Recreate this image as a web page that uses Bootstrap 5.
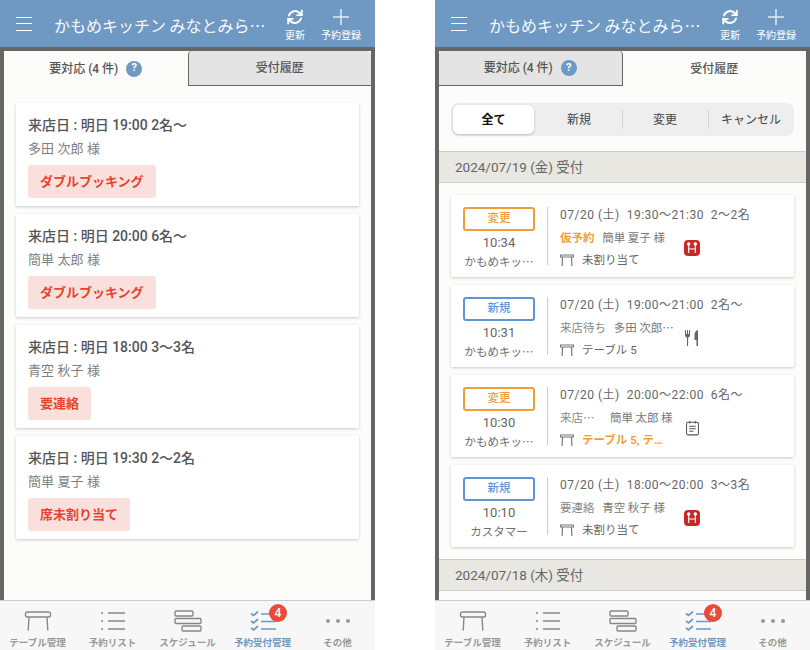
<!DOCTYPE html>
<html lang="ja">
<head>
    <meta charset="UTF-8">
    <meta name="viewport" content="width=device-width, initial-scale=1.0">
    <title>予約受付管理</title>
    <link href="https://cdn.jsdelivr.net/npm/bootstrap@5.3.0/dist/css/bootstrap.min.css" rel="stylesheet">
    <style>
        body { font-family: Roboto, "Noto Sans CJK JP", sans-serif; background: #fff; height: 650px; overflow: hidden; }
        .phone { width: 375px; height: 650px; overflow: hidden; }
        .top-bar { height: 47px; background: #6f99c2; color: #fff; padding-left: 16px; }
        .burger { width: 16px; height: 14px; margin-right: 22px; border-top: 1.5px solid #fff; border-bottom: 1.5px solid #fff; position: relative; }
        .burger::after { content: ""; position: absolute; left: 0; right: 0; top: 5px; border-top: 1.5px solid #fff; }
        .top-title { width: 210px; margin-top: 3px; font-family: "Noto Sans CJK JP", sans-serif; font-size: 16px; line-height: 20px; white-space: nowrap; opacity: .95; }
        .top-action { font-size: 10px; line-height: 12px; white-space: nowrap; align-self: flex-start; padding-top: 8px; }
        .top-action svg { display: block; margin: 0 auto 4px; }
        .refresh-action { width: 40px; margin-left: 11px; }
        .add-action { width: 46px; margin-left: 3px; }
        .phone-body { flex: 1; min-height: 0; background: #fcfcfa; border: solid #666; border-width: 4px 4px 0; overflow: hidden; }
        .tab-row { height: 35px; flex: none; }
        .tab-item { width: 50%; font-size: 12px; color: #555; font-weight: 500; }
        .tab-on { background: #fcfcfa; border-radius: 4px 4px 0 0; }
        .tab-off { background: #e4e4e4; border-bottom: 1px solid #666; border-radius: 4px 4px 0 0; }
        .tab-off-right { border-left: 1px solid #666; }
        .tab-off-left { border-right: 1px solid #666; }
        .help-dot { width: 16px; height: 16px; border-radius: 50%; background: #6f99c2; color: #fff; font-size: 11px; font-weight: 700; }
        .todo-list { padding: 17px 12px 0; gap: 8px; }
        .todo-card { height: 103px; background: #fff; padding: 12px 12px 0; box-shadow: 0 1px 3px rgba(0,0,0,.2); border-radius: 1px; }
        .todo-title { font-size: 14px; font-weight: 500; color: #555; line-height: 20px; }
        .todo-name { font-size: 13px; color: #808080; line-height: 20px; margin-top: 4px; letter-spacing: .1px; }
        .alert-pill { height: 33px; margin-top: 6px; padding: 0 12px; background: #fae0dc; color: #e8432e; font-size: 13px; font-weight: 700; border-radius: 3px; }
        .seg-wrap { margin: 17px 12px 15px; height: 33px; padding: 2px 0 2px 2px; background: #eee; border-radius: 8px; flex: none; }
        .seg-item { flex: 1; font-size: 12px; color: #444; position: relative; }
        .seg-on { flex: none; width: 81px; background: #fff; color: #111; font-weight: 700; border-radius: 6px; box-shadow: 0 1px 3px rgba(0,0,0,.2); margin-right: 2px; }
        .seg-line::before { content: ""; position: absolute; left: 0; top: 5px; bottom: 5px; border-left: 1px solid #d4d4d4; }
        .date-bar { height: 32px; flex: none; padding-left: 16px; background: #e9e7e1; border-top: 1px solid #ccc; border-bottom: 1px solid #ccc; font-size: 13.5px; color: #666; }
        .log-list { padding: 12px 12px; gap: 8px; flex: none; }
        .log-card { height: 82px; background: #fff; padding: 12px 12px 0; box-shadow: 0 1px 3px rgba(0,0,0,.2); border-radius: 1px; }
        .log-left { width: 72px; margin-right: 12px; text-align: center; flex: none; }
        .kind-tag { height: 24px; border: 2px solid; border-radius: 3px; font-size: 11.5px; font-weight: 500; }
        .kind-change { border-color: #ef9f3a; color: #ef9f3a; }
        .kind-new { border-color: #5f95d6; color: #5f95d6; }
        .log-time { font-size: 13px; color: #666; line-height: 16px; margin-top: 4px; }
        .log-from { font-family: "Noto Sans CJK JP", sans-serif; font-size: 11.5px; color: #707070; line-height: 16px; margin-top: 2px; white-space: nowrap; }
        .log-main { border-left: 1px solid #ccc; padding-left: 12px; height: 58px; flex: 1; min-width: 0; }
        .log-when { font-size: 12px; color: #666; line-height: 14px; margin-top: 1px; white-space: pre; letter-spacing: .5px; }
        .log-sub { font-family: "Noto Sans CJK JP", sans-serif; font-size: 11.5px; color: #888; line-height: 14px; margin-top: 8px; white-space: pre; }
        .log-texts { width: 116px; margin-right: 8px; flex: none; }
        .log-who { color: #777; }
        .warn-text { color: #ef9f3a; font-weight: 700; }
        .seat-line { font-size: 11.5px; color: #666; line-height: 14px; margin-top: 9px; white-space: nowrap; }
        .seat-line svg { margin-right: 8px; flex: none; }
        .status-icon { margin-top: 6px; flex: none; }
        .memo-icon { margin-left: 2px; }
        .bottom-bar { height: 50px; flex: none; background: #f7f7f7; border-top: 1px solid #ccc; }
        .bottom-item { width: 75px; color: #999; font-size: 9.5px; font-weight: 700; line-height: 12px; padding-top: 8px; position: relative; white-space: nowrap; }
        .bottom-item svg { display: block; height: 24px; margin-bottom: 4px; }
        .bottom-on { color: #6f99c2; }
        .count-dot { position: absolute; left: 44px; top: 3px; width: 18px; height: 18px; border-radius: 50%; background: #eb4a3a; color: #fff; font-size: 12px; font-weight: 500; }
    </style>
</head>
<body class="d-flex justify-content-between">

    <!-- shared icons -->
    <svg width="0" height="0" class="position-absolute">
        <symbol id="ic-refresh" viewBox="0 0 24 24"><g fill="none" stroke="#fff" stroke-width="2.6" stroke-linecap="round" stroke-linejoin="round"><path d="M4 10a8.500 8.500 0 0 1 14.500-3L21 9.500"/><path d="M21 3.500v6h-6"/><path d="M20 14a8.500 8.500 0 0 1-14.500 3L3 14.500"/><path d="M3 20.500v-6h6"/></g></symbol>
        <symbol id="ic-plus" viewBox="0 0 18 18"><path d="M9 1v16M1 9h16" stroke="#fff" stroke-opacity=".8" stroke-width="1.500" fill="none"/></symbol>
        <symbol id="ic-table" viewBox="0 0 28 20"><g fill="none" stroke="#888" stroke-width="1.400"><rect x="1.500" y="1" width="25" height="5" rx="1.800"/><path d="M5 6l-.8 13.500M23 6l.8 13.500"/></g></symbol>
        <symbol id="ic-seat" viewBox="0 0 14 12"><g fill="none" stroke="#777" stroke-width="1.200"><path d="M.5 1h13v2H.5z"/><path d="M2.500 3l-.4 9M11.500 3l.4 9"/></g></symbol>
        <symbol id="ic-list" viewBox="0 0 26 20"><g stroke="#888" stroke-width="1.400"><path d="M8 2h17M8 10h17M8 18h17"/><path d="M1 2h2M1 10h2M1 18h2" stroke-width="1.600"/></g></symbol>
        <symbol id="ic-schedule" viewBox="0 0 28 22"><g fill="none" stroke="#888" stroke-width="1.400"><rect x="1" y="1" width="18" height="5" rx="1"/><rect x="1" y="8.500" width="26" height="5" rx="1"/><rect x="8" y="16" width="19" height="5" rx="1"/></g></symbol>
        <symbol id="ic-check" viewBox="0 0 26 20"><g fill="none" stroke="#6f99c2" stroke-width="1.700"><path d="M1 2.500l2.500 2L8 .5M1 10l2.500 2L8 8M1 17l2.500 2L8 15"/><path d="M11 3h15M11 10.500h15M11 18h15"/></g></symbol>
        <symbol id="ic-red" viewBox="0 0 16 16"><rect width="16" height="16" rx="4" fill="#c52b26"/><g stroke="#fff" stroke-width="1.100" fill="#fff"><path d="M4.700 5v8M11.300 5v8M4.700 9h6.600"/><circle cx="4.700" cy="4" r="1.200"/><circle cx="11.300" cy="4" r="1.200"/></g></symbol>
        <symbol id="ic-meal" viewBox="0 0 16 18"><g fill="#666"><path d="M1 1h1v4h1V1h1v4h1V1h1v5c0 1.500-1 2.400-1.900 2.700V17H3V8.700C2 8.400 1 7.500 1 6z"/><path d="M14 1v16h-1.500v-6H10.500V6c0-2.800 1.500-4.500 3.500-5z"/></g></symbol>
        <symbol id="ic-memo" viewBox="0 0 14 16"><g fill="none" stroke="#555" stroke-width="1.100"><rect x=".6" y="1.800" width="12.800" height="13.600" rx="1.500"/><path d="M4 .5v2.600M10 .5v2.600M3.500 6h7M3.500 8.800h7M3.500 11.600h4.500"/></g></symbol>
    </svg>

    <!-- 要対応 -->
    <div class="phone d-flex flex-column">
        <header class="top-bar d-flex align-items-center flex-shrink-0">
            <div class="burger"></div>
            <div class="top-title">かもめキッチン みなとみら…</div>
            <div class="top-action refresh-action text-center"><svg width="18" height="18"><use href="#ic-refresh"/></svg>更新</div>
            <div class="top-action add-action text-center"><svg width="18" height="18"><use href="#ic-plus"/></svg>予約登録</div>
        </header>
        <div class="phone-body d-flex flex-column">
            <div class="tab-row d-flex">
                <div class="tab-item tab-on d-flex align-items-center justify-content-center gap-2">要対応 (4 件) <span class="help-dot d-flex align-items-center justify-content-center">?</span></div>
                <div class="tab-item tab-off tab-off-right d-flex align-items-center justify-content-center">受付履歴</div>
            </div>
            <div class="todo-list d-flex flex-column">
                <div class="todo-card">
                    <div class="todo-title">来店日 : 明日 19:00 2名～</div>
                    <div class="todo-name">多田 次郎 様</div>
                    <div class="alert-pill d-inline-flex align-items-center">ダブルブッキング</div>
                </div>
                <div class="todo-card">
                    <div class="todo-title">来店日 : 明日 20:00 6名～</div>
                    <div class="todo-name">簡単 太郎 様</div>
                    <div class="alert-pill d-inline-flex align-items-center">ダブルブッキング</div>
                </div>
                <div class="todo-card">
                    <div class="todo-title">来店日 : 明日 18:00 3～3名</div>
                    <div class="todo-name">青空 秋子 様</div>
                    <div class="alert-pill d-inline-flex align-items-center">要連絡</div>
                </div>
                <div class="todo-card">
                    <div class="todo-title">来店日 : 明日 19:30 2～2名</div>
                    <div class="todo-name">簡単 夏子 様</div>
                    <div class="alert-pill d-inline-flex align-items-center">席未割り当て</div>
                </div>
            </div>
        </div>
        <nav class="bottom-bar d-flex">
            <div class="bottom-item d-flex flex-column align-items-center"><svg width="28" height="24"><use href="#ic-table"/></svg>テーブル管理</div>
            <div class="bottom-item d-flex flex-column align-items-center"><svg width="26" height="24"><use href="#ic-list"/></svg>予約リスト</div>
            <div class="bottom-item d-flex flex-column align-items-center"><svg width="28" height="24"><use href="#ic-schedule"/></svg>スケジュール</div>
            <div class="bottom-item bottom-on d-flex flex-column align-items-center"><svg width="26" height="24"><use href="#ic-check"/></svg>予約受付管理<span class="count-dot d-flex align-items-center justify-content-center">4</span></div>
            <div class="bottom-item d-flex flex-column align-items-center"><svg width="26" height="24"><g fill="#999"><circle cx="3" cy="12" r="2"/><circle cx="13" cy="12" r="2"/><circle cx="23" cy="12" r="2"/></g></svg>その他</div>
        </nav>
    </div>

    <!-- 受付履歴 -->
    <div class="phone d-flex flex-column">
        <header class="top-bar d-flex align-items-center flex-shrink-0">
            <div class="burger"></div>
            <div class="top-title">かもめキッチン みなとみら…</div>
            <div class="top-action refresh-action text-center"><svg width="18" height="18"><use href="#ic-refresh"/></svg>更新</div>
            <div class="top-action add-action text-center"><svg width="18" height="18"><use href="#ic-plus"/></svg>予約登録</div>
        </header>
        <div class="phone-body d-flex flex-column">
            <div class="tab-row d-flex">
                <div class="tab-item tab-off tab-off-left d-flex align-items-center justify-content-center gap-2">要対応 (4 件) <span class="help-dot d-flex align-items-center justify-content-center">?</span></div>
                <div class="tab-item tab-on d-flex align-items-center justify-content-center">受付履歴</div>
            </div>
            <div class="seg-wrap d-flex">
                <div class="seg-item seg-on d-flex align-items-center justify-content-center">全て</div>
                <div class="seg-item d-flex align-items-center justify-content-center">新規</div>
                <div class="seg-item seg-line d-flex align-items-center justify-content-center">変更</div>
                <div class="seg-item seg-line d-flex align-items-center justify-content-center">キャンセル</div>
            </div>
            <div class="date-bar d-flex align-items-center">2024/07/19 (金) 受付</div>
            <div class="log-list d-flex flex-column">
                <div class="log-card d-flex">
                    <div class="log-left">
                        <div class="kind-tag kind-change d-flex align-items-center justify-content-center">変更</div>
                        <div class="log-time">10:34</div>
                        <div class="log-from">かもめキッ…</div>
                    </div>
                    <div class="log-main">
                        <div class="log-when">07/20 (土)  19:30～21:30  2～2名</div>
                        <div class="d-flex align-items-center">
                            <div class="log-texts">
                                <div class="log-sub"><span class="warn-text">仮予約</span>   <span class="log-who">簡単 夏子 様</span></div>
                                <div class="seat-line d-flex align-items-center"><svg width="14" height="12"><use href="#ic-seat"/></svg>未割り当て</div>
                            </div>
                            <svg class="status-icon" width="16" height="16"><use href="#ic-red"/></svg>
                        </div>
                    </div>
                </div>
                <div class="log-card d-flex">
                    <div class="log-left">
                        <div class="kind-tag kind-new d-flex align-items-center justify-content-center">新規</div>
                        <div class="log-time">10:31</div>
                        <div class="log-from">かもめキッ…</div>
                    </div>
                    <div class="log-main">
                        <div class="log-when">07/20 (土)  19:00～21:00  2名～</div>
                        <div class="d-flex align-items-center">
                            <div class="log-texts">
                                <div class="log-sub">来店待ち   <span class="log-who">多田 次郎…</span></div>
                                <div class="seat-line d-flex align-items-center"><svg width="14" height="12"><use href="#ic-seat"/></svg>テーブル 5</div>
                            </div>
                            <svg class="status-icon" width="16" height="18"><use href="#ic-meal"/></svg>
                        </div>
                    </div>
                </div>
                <div class="log-card d-flex">
                    <div class="log-left">
                        <div class="kind-tag kind-change d-flex align-items-center justify-content-center">変更</div>
                        <div class="log-time">10:30</div>
                        <div class="log-from">かもめキッ…</div>
                    </div>
                    <div class="log-main">
                        <div class="log-when">07/20 (土)  20:00～22:00  6名～</div>
                        <div class="d-flex align-items-center">
                            <div class="log-texts">
                                <div class="log-sub">来店…      <span class="log-who">簡単 太郎 様</span></div>
                                <div class="seat-line d-flex align-items-center"><svg width="14" height="12"><use href="#ic-seat"/></svg><span class="warn-text">テーブル 5, テ…</span></div>
                            </div>
                            <svg class="status-icon memo-icon" width="13" height="16"><use href="#ic-memo"/></svg>
                        </div>
                    </div>
                </div>
                <div class="log-card d-flex">
                    <div class="log-left">
                        <div class="kind-tag kind-new d-flex align-items-center justify-content-center">新規</div>
                        <div class="log-time">10:10</div>
                        <div class="log-from">カスタマー</div>
                    </div>
                    <div class="log-main">
                        <div class="log-when">07/20 (土)  18:00～20:00  3～3名</div>
                        <div class="d-flex align-items-center">
                            <div class="log-texts">
                                <div class="log-sub">要連絡   <span class="log-who">青空 秋子 様</span></div>
                                <div class="seat-line d-flex align-items-center"><svg width="14" height="12"><use href="#ic-seat"/></svg>未割り当て</div>
                            </div>
                            <svg class="status-icon" width="16" height="16"><use href="#ic-red"/></svg>
                        </div>
                    </div>
                </div>
            </div>
            <div class="date-bar d-flex align-items-center">2024/07/18 (木) 受付</div>
        </div>
        <nav class="bottom-bar d-flex">
            <div class="bottom-item d-flex flex-column align-items-center"><svg width="28" height="24"><use href="#ic-table"/></svg>テーブル管理</div>
            <div class="bottom-item d-flex flex-column align-items-center"><svg width="26" height="24"><use href="#ic-list"/></svg>予約リスト</div>
            <div class="bottom-item d-flex flex-column align-items-center"><svg width="28" height="24"><use href="#ic-schedule"/></svg>スケジュール</div>
            <div class="bottom-item bottom-on d-flex flex-column align-items-center"><svg width="26" height="24"><use href="#ic-check"/></svg>予約受付管理<span class="count-dot d-flex align-items-center justify-content-center">4</span></div>
            <div class="bottom-item d-flex flex-column align-items-center"><svg width="26" height="24"><g fill="#999"><circle cx="3" cy="12" r="2"/><circle cx="13" cy="12" r="2"/><circle cx="23" cy="12" r="2"/></g></svg>その他</div>
        </nav>
    </div>

    <script src="https://cdn.jsdelivr.net/npm/bootstrap@5.3.0/dist/js/bootstrap.bundle.min.js"></script>
</body>
</html>
